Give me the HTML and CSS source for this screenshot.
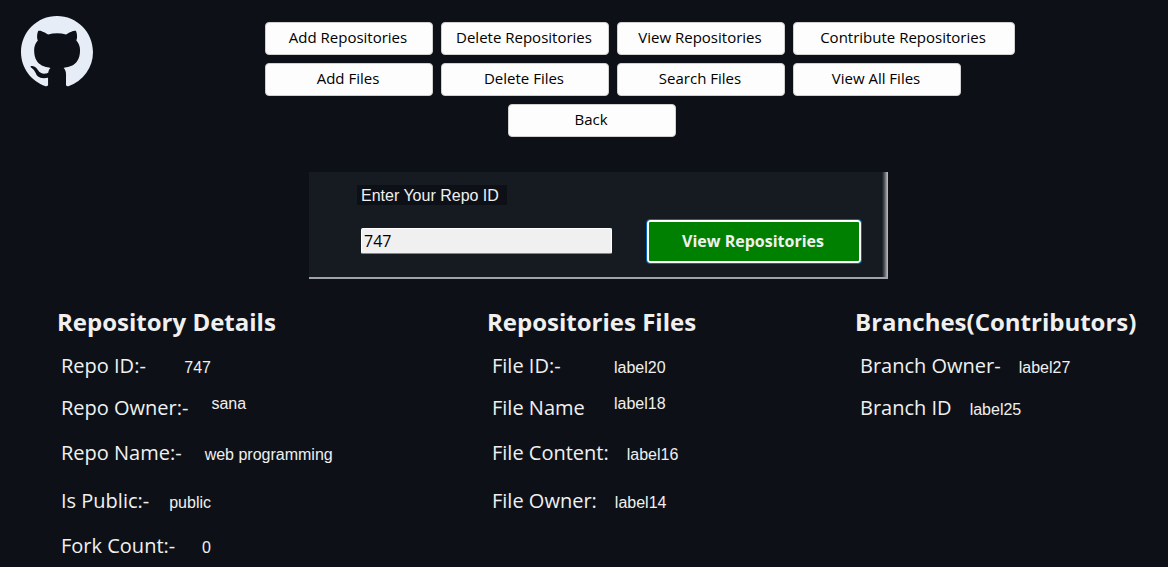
FILE: index.html
```html
<!DOCTYPE html>
<html lang="en">
<head>
<meta charset="utf-8">
<title>View Repositories</title>
<link rel="stylesheet" href="styles.css">
</head>
<body>
<header class="header">
  <svg class="logo" viewBox="0 0 16 16" role="img" aria-label="GitHub"><path fill="currentColor" fill-rule="evenodd" d="M8 0C3.58 0 0 3.58 0 8c0 3.54 2.29 6.53 5.47 7.59.4.07.55-.17.55-.38 0-.19-.01-.82-.01-1.49-2.01.37-2.53-.49-2.69-.94-.09-.23-.48-.94-.82-1.13-.28-.15-.68-.52-.01-.53.63-.01 1.08.58 1.23.82.72 1.21 1.87.87 2.33.66.07-.52.28-.87.51-1.07-1.78-.2-3.64-.89-3.64-3.95 0-.87.31-1.59.82-2.15-.08-.2-.36-1.02.08-2.12 0 0 .67-.21 2.2.82.64-.18 1.32-.27 2-.27.68 0 1.36.09 2 .27 1.53-1.04 2.2-.82 2.2-.82.44 1.1.16 1.92.08 2.12.51.56.82 1.27.82 2.15 0 3.07-1.87 3.75-3.65 3.95.29.25.54.73.54 1.48 0 1.07-.01 1.93-.01 2.2 0 .21.15.46.55.38A8.013 8.013 0 0016 8c0-4.42-3.58-8-8-8z"/></svg>
  <nav class="nav">
    <div class="nav-row">
      <button class="nav-button" type="button">Add Repositories</button>
      <button class="nav-button" type="button">Delete Repositories</button>
      <button class="nav-button" type="button">View Repositories</button>
      <button class="nav-button nav-button-wide" type="button">Contribute Repositories</button>
    </div>
    <div class="nav-row">
      <button class="nav-button" type="button">Add Files</button>
      <button class="nav-button" type="button">Delete Files</button>
      <button class="nav-button" type="button">Search Files</button>
      <button class="nav-button" type="button">View All Files</button>
    </div>
    <div class="nav-row nav-row-back">
      <button class="nav-button" type="button">Back</button>
    </div>
  </nav>
</header>
<main>
  <div class="search">
    <form class="panel">
      <div class="field">
        <label class="field-label" for="repo-id">Enter Your Repo ID</label>
        <input class="field-input" id="repo-id" type="text" value="747">
      </div>
      <button class="submit" type="button">View Repositories</button>
    </form>
  </div>
  <div class="results">
    <section>
      <h2 class="title">Repository Details</h2>
      <dl class="list list-details">
        <div class="row row-spread"><dt class="key">Repo ID:-</dt><dd class="value">747</dd></div>
        <div class="row row-raised"><dt class="key">Repo Owner:-</dt><dd class="value">sana</dd></div>
        <div class="row"><dt class="key">Repo Name:-</dt><dd class="value">web programming</dd></div>
        <div class="row row-spread"><dt class="key">Is Public:-</dt><dd class="value">public</dd></div>
        <div class="row row-spread"><dt class="key">Fork Count:-</dt><dd class="value">0</dd></div>
      </dl>
    </section>
    <section>
      <h2 class="title">Repositories Files</h2>
      <dl class="list list-files">
        <div class="row"><dt class="key">File ID:-</dt><dd class="value">label20</dd></div>
        <div class="row row-raised"><dt class="key">File Name</dt><dd class="value">label18</dd></div>
        <div class="row"><dt class="key">File Content:</dt><dd class="value">label16</dd></div>
        <div class="row"><dt class="key">File Owner:</dt><dd class="value">label14</dd></div>
      </dl>
    </section>
    <section>
      <h2 class="title">Branches(Contributors)</h2>
      <dl class="list">
        <div class="row"><dt class="key">Branch Owner-</dt><dd class="value">label27</dd></div>
        <div class="row"><dt class="key">Branch ID</dt><dd class="value">label25</dd></div>
      </dl>
    </section>
  </div>
</main>
</body>
</html>
```
FILE: styles.css
```css
* {
  box-sizing: border-box;
}

body {
  margin: 0;
  min-height: 100vh;
  background: #0d1117;
  color: #f0f0f0;
  font-family: "Open Sans", "Noto Sans", sans-serif;
}

button,
input {
  font: inherit;
}

.header {
  display: grid;
  grid-template-columns: 265fr 750px 153fr;
  padding-top: 16px;
}

.logo {
  width: 72px;
  height: 72px;
  margin-left: 21px;
  color: #e6edf6;
}

.nav {
  display: flex;
  flex-direction: column;
  gap: 8px;
  padding-top: 6px;
}

.nav-row {
  display: flex;
  gap: 8px;
}

.nav-row-back {
  padding-left: 243px;
}

.nav-button {
  width: 168px;
  height: 33px;
  padding: 0 2px 4px 0;
  border: 1px solid #d0d0d0;
  border-radius: 4px;
  background: #fdfdfd;
  color: #000;
  font-size: 15px;
  line-height: 20px;
}

.nav-button-wide {
  width: 222px;
}

.search {
  display: grid;
  grid-template-columns: 309fr 579px 280fr;
  padding-top: 35px;
}

.panel {
  grid-column: 2;
  display: flex;
  align-items: flex-end;
  justify-content: space-between;
  padding: 13px 26px 13px 48px;
  border-bottom: 2px solid #a0a3a8;
  background: linear-gradient(to right, transparent calc(100% - 6px), #44484e calc(100% - 4px), #c4c4c4 100%), #161b22;
}

.field {
  display: flex;
  flex-direction: column;
  align-items: flex-start;
  gap: 23px;
  padding-bottom: 10px;
}

.field-label {
  padding: 2px 8px 0 4px;
  background: #0d1117;
  font-family: "Liberation Sans", Arial, sans-serif;
  font-size: 16px;
  line-height: 18px;
}

.field-input {
  width: 251px;
  height: 26px;
  margin-left: 4px;
  padding: 0 2px;
  border: 1px solid #fff;
  border-bottom: 1px solid #868686;
  border-radius: 2px;
  background: #f0f0f0;
  color: #000;
  font-size: 16px;
}

.submit {
  width: 216px;
  height: 45px;
  padding: 0 2px 2px 0;
  border: 1px solid #0067c0;
  border-radius: 4px;
  background: #008000;
  box-shadow: inset 0 0 0 2px #fff;
  color: #f0f0f0;
  font-size: 16px;
  font-weight: 700;
}

.results {
  display: grid;
  grid-template-columns: 430fr 368fr 313fr;
  padding: 26px 0 0 57px;
}

.title {
  margin: 0;
  font-size: 24px;
  line-height: 34px;
  white-space: nowrap;
}

.list {
  display: grid;
  grid-template-rows: 42px 42px 48px 48px 42px;
  margin: 6px 0 0;
  padding-left: 5px;
}

.row {
  display: flex;
  align-items: center;
  gap: 18px;
  white-space: nowrap;
}

.list-details {
  padding-left: 4px;
}

.list-details .row {
  gap: 23px;
}

.list-details .row-spread {
  width: 150px;
  gap: 0;
  justify-content: space-between;
}

.key {
  font-size: 20px;
  line-height: 30px;
}

.list-files .key {
  min-width: 104px;
}

.value {
  margin: 0;
  padding-top: 4px;
  font-family: "Liberation Sans", Arial, sans-serif;
  font-size: 16px;
  line-height: 20px;
}

.row-raised .value {
  padding: 0 0 8px;
}
```
